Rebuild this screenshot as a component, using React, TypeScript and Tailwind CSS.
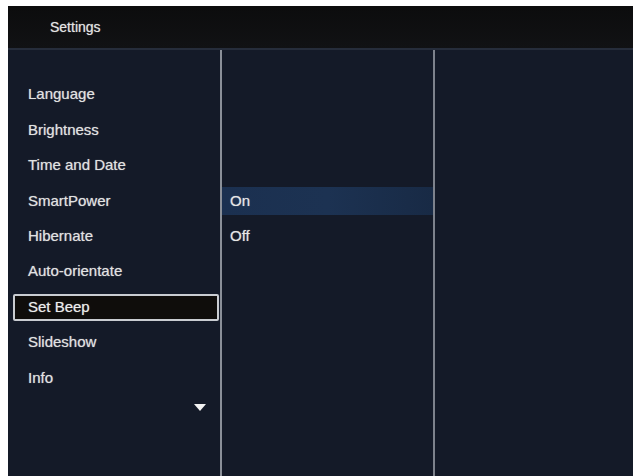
const menu = [
  "Language",
  "Brightness",
  "Time and Date",
  "SmartPower",
  "Hibernate",
  "Auto-orientate",
  "Set Beep",
  "Slideshow",
  "Info",
];

const options = ["On", "Off"];

export default function App() {
  const font = { fontFamily: '"Liberation Sans", Arial, sans-serif' };
  return (
    <div className="w-[640px] h-[476px] bg-white pl-[8px] pt-[6px] overflow-hidden" style={font}>
      <div className="w-[625px] h-[470px] flex flex-col bg-[#141a28] [text-shadow:0_0_1px_rgba(255,255,255,0.55)]">
        {/* title bar */}
        <div className="h-[42px] shrink-0 flex items-center pl-[42px] bg-gradient-to-b from-[#0c0c0d] to-[#111214] text-[14px] text-[#e4e4e4]">
          Settings
        </div>
        <div className="h-[2px] shrink-0 bg-[#262d3b]" />

        <div className="flex flex-1">
          {/* main menu */}
          <div className="w-[212px] pt-[27px] pl-[5px] pr-[1px] flex flex-col">
            {menu.map((item) => {
              const active = item === "Set Beep";
              return (
                <div key={item} className="h-[35.4px] flex items-center">
                  <div
                    className={
                      active
                        ? "w-full h-[27px] flex items-center pl-[13px] border-2 border-[#c9ccd1] rounded-[2px] bg-[#0f0d0b] text-[15px] text-[#ececec]"
                        : "w-full flex items-center pl-[15px] text-[15px] text-[#e2e2e2]"
                    }
                  >
                    {item}
                  </div>
                </div>
              );
            })}
            <div className="flex justify-end pr-[13px] pt-[8px]">
              <svg width="12" height="7" viewBox="0 0 12 7">
                <path d="M0 0H12L6 7Z" fill="#f2f2f2" />
              </svg>
            </div>
          </div>

          <div className="w-[2px] bg-[#8b9099]" />

          {/* option list */}
          <div className="w-[211px] pt-[27px] flex flex-col">
            {menu.slice(0, 3).map((k) => (
              <div key={k} className="h-[35.4px]" />
            ))}
            {options.map((opt) => (
              <div key={opt} className="h-[35.4px] flex items-center">
                <div
                  className={
                    opt === "On"
                      ? "w-full h-[28px] flex items-center pl-[8px] bg-gradient-to-r from-[#1b3050] via-[#1c3252] to-[#182a45] text-[15px] text-[#e6e6e6]"
                      : "w-full flex items-center pl-[8px] text-[15px] text-[#e6e6e6]"
                  }
                >
                  {opt}
                </div>
              </div>
            ))}
          </div>

          <div className="w-[2px] bg-[#7d828c]" />

          {/* preview pane */}
          <div className="flex-1" />
        </div>
      </div>
    </div>
  );
}
